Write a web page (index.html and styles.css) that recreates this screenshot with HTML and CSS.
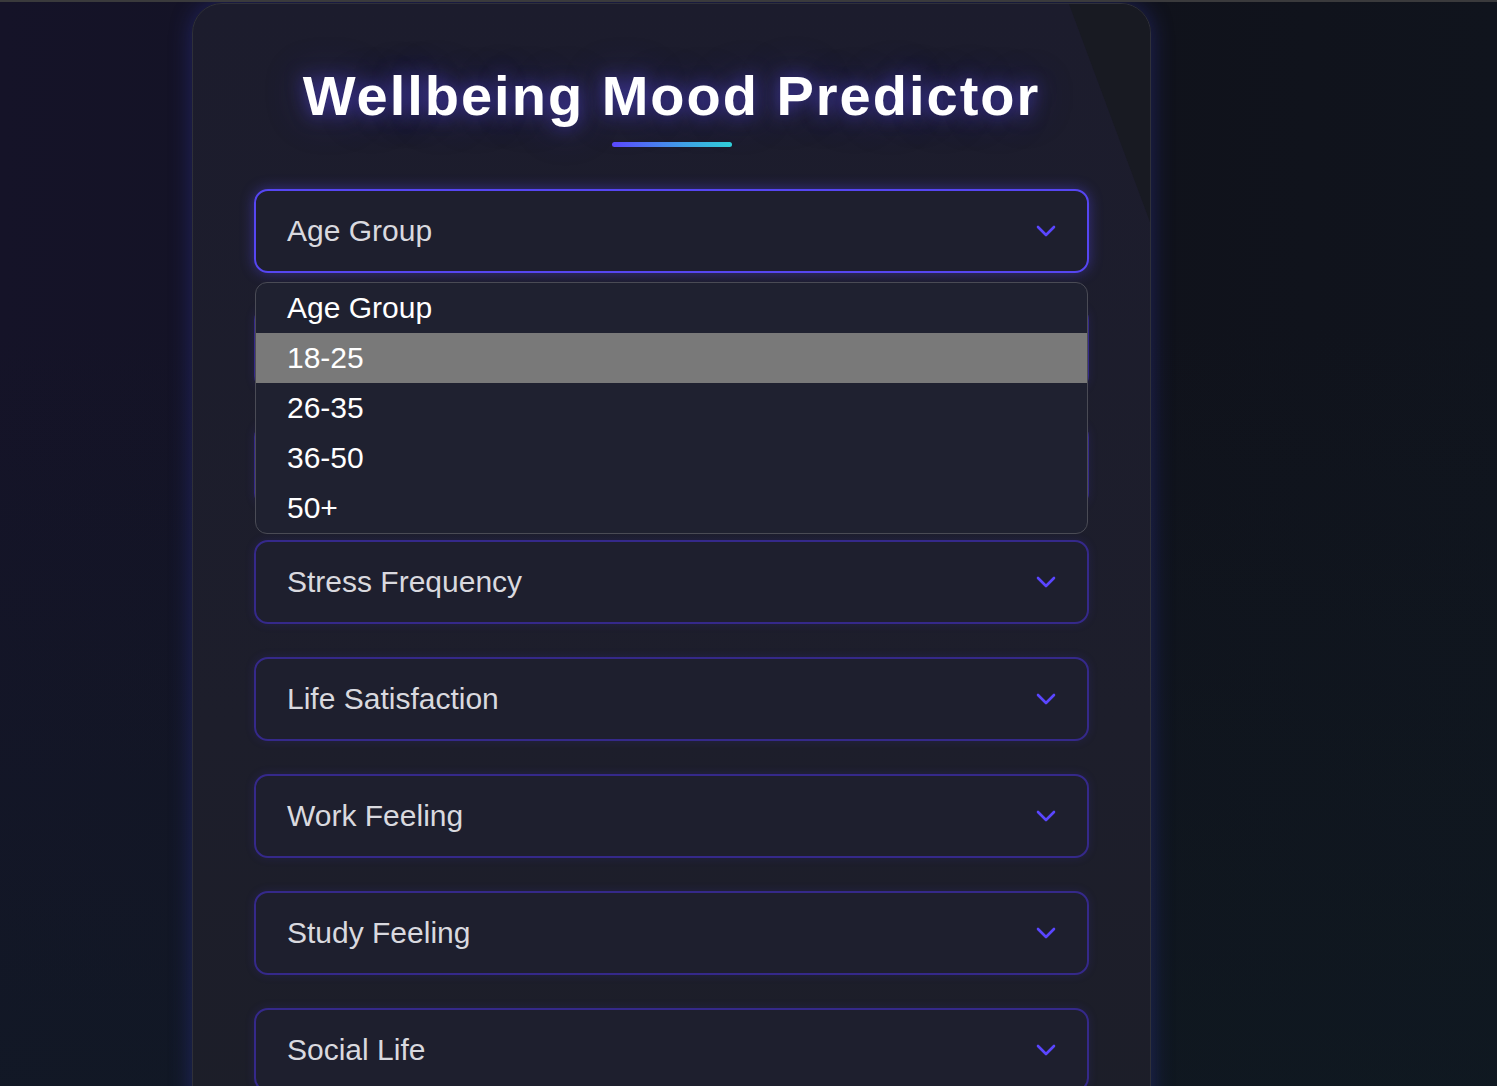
FILE: index.html
```html
<!DOCTYPE html>
<html lang="en">
<head>
<meta charset="utf-8">
<title>Wellbeing Mood Predictor</title>
<link rel="stylesheet" href="styles.css">
</head>
<body>
<div class="page">
  <main class="card">
    <h1 class="title">Wellbeing Mood Predictor</h1>
    <div class="title-bar"></div>
    <form class="form">
      <div class="field">
        <div class="select select--focused">
          <span class="select-label">Age Group</span>
          <svg class="chevron" width="22" height="14" viewBox="0 0 22 14"><polyline points="3,3 11,11 19,3"/></svg>
        </div>
        <ul class="dropdown">
          <li class="option">Age Group</li>
          <li class="option option--active">18-25</li>
          <li class="option">26-35</li>
          <li class="option">36-50</li>
          <li class="option">50+</li>
        </ul>
      </div>
      <div class="field field--covered">
        <div class="select">
          <span class="select-label">Gender</span>
          <svg class="chevron" width="22" height="14" viewBox="0 0 22 14"><polyline points="3,3 11,11 19,3"/></svg>
        </div>
      </div>
      <div class="field field--covered">
        <div class="select">
          <span class="select-label">Sleep Quality</span>
          <svg class="chevron" width="22" height="14" viewBox="0 0 22 14"><polyline points="3,3 11,11 19,3"/></svg>
        </div>
      </div>
      <div class="field">
        <div class="select">
          <span class="select-label">Stress Frequency</span>
          <svg class="chevron" width="22" height="14" viewBox="0 0 22 14"><polyline points="3,3 11,11 19,3"/></svg>
        </div>
      </div>
      <div class="field">
        <div class="select">
          <span class="select-label">Life Satisfaction</span>
          <svg class="chevron" width="22" height="14" viewBox="0 0 22 14"><polyline points="3,3 11,11 19,3"/></svg>
        </div>
      </div>
      <div class="field">
        <div class="select">
          <span class="select-label">Work Feeling</span>
          <svg class="chevron" width="22" height="14" viewBox="0 0 22 14"><polyline points="3,3 11,11 19,3"/></svg>
        </div>
      </div>
      <div class="field">
        <div class="select">
          <span class="select-label">Study Feeling</span>
          <svg class="chevron" width="22" height="14" viewBox="0 0 22 14"><polyline points="3,3 11,11 19,3"/></svg>
        </div>
      </div>
      <div class="field">
        <div class="select">
          <span class="select-label">Social Life</span>
          <svg class="chevron" width="22" height="14" viewBox="0 0 22 14"><polyline points="3,3 11,11 19,3"/></svg>
        </div>
      </div>
    </form>
  </main>
</div>
</body>
</html>
```
FILE: styles.css
```css
* { box-sizing: border-box; }

html, body {
  height: 100%;
}

body {
  margin: 0;
  overflow: hidden;
  font-family: "Liberation Sans", Arial, sans-serif;
  border-top: 2px solid #3a3a3c;
  background:
    linear-gradient(180deg, rgba(15, 27, 34, 0) 30%, rgba(15, 28, 36, 0.55) 100%),
    linear-gradient(90deg, #151328 0%, #141326 15%, #12121f 50%, #10121b 75%, #10141d 100%);
}

.page {
  display: flex;
  padding-left: 192px;
  padding-top: 1px;
}

.card {
  position: relative;
  width: 959px;
  min-height: 1200px;
  padding: 58px 61px 0;
  border: 1px solid #2f3039;
  border-radius: 30px;
  background: linear-gradient(180deg, #1c1c2d 0%, #1d1e2b 60%, #1c1e28 100%);
  box-shadow: 0 0 22px rgba(48, 56, 170, 0.45);
  overflow: hidden;
}

.card::before {
  content: "";
  position: absolute;
  inset: 0;
  background: #181a22;
  clip-path: polygon(876px 0, 100% 0, 100% 218px);
  pointer-events: none;
}

.title {
  position: relative;
  margin: 0;
  font-size: 56px;
  line-height: 1.2;
  font-weight: 700;
  letter-spacing: 2px;
  text-align: center;
  color: #ffffff;
  text-shadow: 0 0 18px rgba(96, 80, 255, 0.55), 0 0 40px rgba(80, 64, 220, 0.35);
}

.title-bar {
  position: relative;
  width: 120px;
  height: 5px;
  margin: 13px auto 0;
  border-radius: 3px;
  background: linear-gradient(90deg, #5a47ff 0%, #3fa0e6 60%, #2fcfd8 100%);
}

.form {
  position: relative;
  display: flex;
  flex-direction: column;
  gap: 33px;
  margin-top: 42px;
}

.field {
  position: relative;
}

.select {
  display: flex;
  align-items: center;
  justify-content: space-between;
  height: 84px;
  padding: 0 30px 0 31px;
  border: 2px solid #35298a;
  border-radius: 14px;
  background: #1e1f2e;
  box-shadow: 0 0 10px rgba(70, 55, 200, 0.18);
  color: #d9d9df;
  font-size: 30px;
}

.select--focused {
  border-color: #5646f2;
  box-shadow: 0 0 14px rgba(86, 70, 242, 0.45);
}

.chevron {
  display: block;
  fill: none;
  stroke: #5a46ff;
  stroke-width: 2.6;
  stroke-linecap: round;
  stroke-linejoin: round;
}

.dropdown {
  position: absolute;
  z-index: 5;
  top: calc(100% + 9px);
  left: 1px;
  right: 1px;
  margin: 0;
  padding: 0;
  list-style: none;
  border: 1px solid #4a4b55;
  border-radius: 12px;
  background: #1f2130;
  overflow: hidden;
}

.option {
  display: flex;
  align-items: center;
  height: 50px;
  padding-left: 31px;
  color: #ffffff;
  font-size: 30px;
}

.option--active {
  background: #797979;
}
```
